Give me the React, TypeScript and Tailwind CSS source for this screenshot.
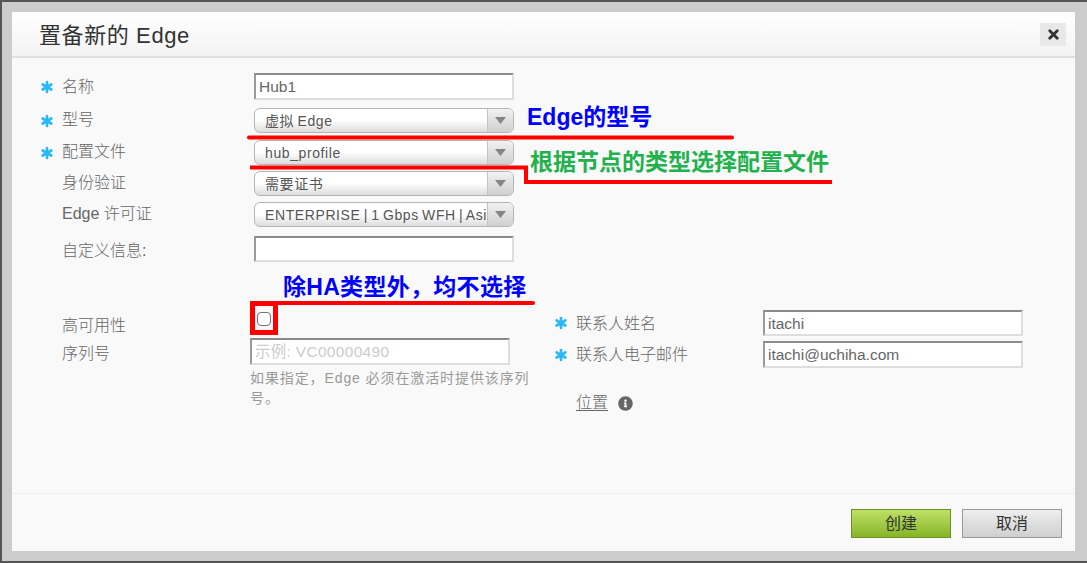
import { Asterisk, X } from 'lucide-react';
import { FaInfoCircle } from 'react-icons/fa';
import type { ReactNode } from 'react';

const font = "font-['Liberation_Sans','Noto_Sans_CJK_SC',sans-serif]";

function Star() {
  return <Asterisk size={20} strokeWidth={3.2} className="text-[#2bb8f5] shrink-0 -ml-[4px]" />;
}

function Label({ required, width, textClass, children }: { required?: boolean; width: string; textClass?: string; children: ReactNode }) {
  return (
    <div className={`flex items-center shrink-0 ${width}`}>
      <span className="w-[21px] shrink-0 flex items-center">{required && <Star />}</span>
      <span className={`text-[16px] font-light text-[#666] whitespace-nowrap ${textClass ?? ''}`}>{children}</span>
    </div>
  );
}

function TextBox({ value, placeholder, height }: { value?: string; placeholder?: string; height: string }) {
  return (
    <input
      readOnly
      value={value ?? ''}
      placeholder={placeholder}
      className={`w-[260px] ${height} bg-white border-2 border-t-[#8a8a8a] border-l-[#9a9a9a] border-r-[#dedede] border-b-[#dedede] px-[3px] pt-[1px] text-[15.500px] text-[#666] placeholder:text-[#ccc] placeholder:tracking-[0.3px] outline-none`}
    />
  );
}

function SelectBox({ value }: { value: string }) {
  return (
    <div className="w-[260px] h-[25px] flex rounded-[6px] border border-[#b5b5b5] bg-gradient-to-b from-white from-50% to-[#dcdcdc] overflow-hidden">
      <div className="flex-1 min-w-0 pl-[10px] text-[14px] leading-[24px] tracking-[0.6px] [word-spacing:-1.200px] text-[#555] whitespace-nowrap">
        {value}
      </div>
      <div className="w-[26px] shrink-0 flex items-center justify-center border-l border-[#c4c4c4] bg-gradient-to-b from-[#f2f2f2] to-[#cfcfcf]">
        <svg width="11" height="7" viewBox="0 0 11 7"><path d="M0 0h11L5.5 7z" fill="#858585" /></svg>
      </div>
    </div>
  );
}

function Row({ children, className }: { children: ReactNode; className?: string }) {
  return <div className={`flex items-center ${className ?? ''}`}>{children}</div>;
}

export default function App() {
  return (
    <div className={`relative w-[1087px] h-[563px] overflow-hidden border-2 border-[#555] border-r-0 border-b-[#555] bg-[#cccccc] pl-[10px] pt-[10px] ${font}`}>
      <div className="w-[1063px] h-[539px] flex flex-col bg-[#f9f9f9]">
        <div className="h-[46px] shrink-0 flex items-center justify-between pl-[27px] pr-[9px] border-b-2 border-[#e0e0e0] bg-gradient-to-b from-white to-[#f3f3f3]">
          <h1 className="text-[22px] pt-[3px] text-[#333] tracking-[0.6px]">置备新的 Edge</h1>
          <button className="w-[26px] h-[23px] flex items-center justify-center bg-[#e8e8e8]">
            <X size={15} strokeWidth={4.5} className="text-[#333]" />
          </button>
        </div>

        <div className="flex-1 pl-[29px] pt-[15px]">
          <Row className="h-[27px]">
            <Label required width="w-[213px]" textClass="pt-[1px]">名称</Label>
            <TextBox value="Hub1" height="h-[27px]" />
          </Row>
          <Row className="h-[25px] mt-[8px]">
            <Label required width="w-[213px]" textClass="pb-[2px]">型号</Label>
            <SelectBox value="虚拟 Edge" />
          </Row>
          <Row className="h-[25px] mt-[7px]">
            <Label required width="w-[213px]" textClass="pb-[2px]">配置文件</Label>
            <SelectBox value="hub_profile" />
          </Row>
          <Row className="h-[25px] mt-[6px]">
            <Label width="w-[213px]" textClass="pb-[2px]">身份验证</Label>
            <SelectBox value="需要证书" />
          </Row>
          <Row className="h-[25px] mt-[6px]">
            <Label width="w-[213px]" textClass="pb-[2px]">Edge 许可证</Label>
            <SelectBox value="ENTERPRISE | 1 Gbps WFH | Asi" />
          </Row>
          <Row className="h-[26px] mt-[9px]">
            <Label width="w-[213px]" textClass="pt-[3px]">自定义信息:</Label>
            <TextBox height="h-[26px]" />
          </Row>

          <div className="flex mt-[48px]">
            <div className="w-[514px] shrink-0">
              <Row className="h-[28px]">
                <Label width="w-[209px]" textClass="pt-[3px]">高可用性</Label>
                <div className="w-[14px] h-[14px] ml-[7px] mb-[10px] rounded-[4px] border-[1.500px] border-[#777] bg-white" />
              </Row>
              <Row className="h-[27px]">
                <Label width="w-[209px]" textClass="pt-[5px]">序列号</Label>
                <TextBox placeholder="示例: VC00000490" height="h-[27px]" />
              </Row>
              <p className="ml-[209px] mt-[3px] w-[284px] text-[14px] leading-[20px] tracking-[0.9px] text-[#999]">
                如果指定，Edge 必须在激活时提供该序列号。
              </p>
            </div>
            <div>
              <Row className="h-[26px]">
                <Label required width="w-[208px]" textClass="pt-[1px]">联系人姓名</Label>
                <TextBox value="itachi" height="h-[26px]" />
              </Row>
              <Row className="h-[27px] mt-[5px]">
                <Label required width="w-[208px]" textClass="pt-[1px]">联系人电子邮件</Label>
                <TextBox value="itachi@uchiha.com" height="h-[27px]" />
              </Row>
              <Row className="mt-[23px] ml-[21px]">
                <span className="text-[16px] font-light text-[#666] underline underline-offset-2">位置</span>
                <FaInfoCircle size={15} className="ml-[10px] text-[#666]" />
              </Row>
            </div>
          </div>
        </div>

        <div className="h-[58px] shrink-0 flex items-start justify-end gap-[11px] pr-[13px] pt-[15px] border-t border-[#eeeeee]">
          <button className="w-[100px] h-[29px] border border-[#6f8f2a] bg-gradient-to-b from-[#bfe066] to-[#86b522] text-[16px] text-[#333]">
            创建
          </button>
          <button className="w-[100px] h-[29px] border border-[#999] bg-gradient-to-b from-[#efefef] to-[#cfcfcf] text-[16px] text-[#333]">
            取消
          </button>
        </div>
      </div>

      {/* annotations drawn over the form */}
      <svg className="absolute left-[-2px] top-[-2px]" width="1087" height="563" fill="none" stroke="#ff0000" strokeWidth="4" strokeLinecap="round">
        <path d="M249 137.500H732" />
        <path d="M250 167.500H526V182H832" strokeLinecap="butt" />
        <path d="M278 303H533" />
        <rect x="252.500" y="303.500" width="23" height="29" strokeWidth="5" />
      </svg>
      <span className="absolute left-[525px] top-[100px] text-[23px] leading-[30px] font-bold text-[#0000ff] whitespace-nowrap">Edge的型号</span>
      <span className="absolute left-[528px] top-[145px] text-[23px] leading-[30px] font-bold text-[#22b14c] whitespace-nowrap">根据节点的类型选择配置文件</span>
      <span className="absolute left-[281px] top-[270px] text-[23px] leading-[30px] tracking-[0.3px] font-bold text-[#0000ff] whitespace-nowrap">除HA类型外，均不选择</span>
    </div>
  );
}
